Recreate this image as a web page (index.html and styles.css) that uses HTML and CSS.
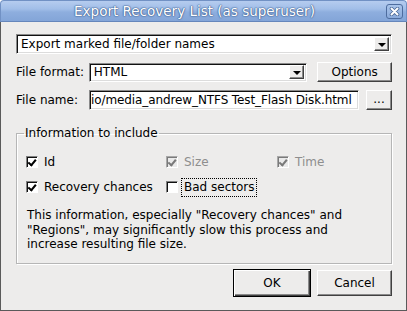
FILE: index.html
```html
<!DOCTYPE html>
<html lang="en">

<head>
    <meta charset="UTF-8">
    <title>Export Recovery List</title>
    <link rel="stylesheet" href="styles.css">
</head>

<body>

    <div class="window">
        <div class="titlebar">
            <span class="title">Export Recovery List (as superuser)</span>
            <span class="close">
                <svg width="11" height="9" viewBox="0 0 11 9">
                    <path d="M2.5 1.5 L8.5 7.5 M8.5 1.5 L2.5 7.5" stroke="#4a6898" stroke-width="3.6" stroke-linecap="round"/>
                    <path d="M2.5 1.5 L8.5 7.5 M8.5 1.5 L2.5 7.5" stroke="#fff" stroke-width="2" stroke-linecap="round"/>
                </svg>
            </span>
        </div>

        <div class="content">
            <div class="combo wide">
                <span class="value">Export marked file/folder names</span>
                <span class="arrow"><i></i></span>
            </div>

            <div class="row">
                <span class="label">File format:</span>
                <div class="combo format">
                    <span class="value">HTML</span>
                    <span class="arrow"><i></i></span>
                </div>
                <span class="button options">Options</span>
            </div>

            <div class="row">
                <span class="label">File name:</span>
                <div class="field">io/media_andrew_NTFS Test_Flash Disk.html</div>
                <span class="button dots">...</span>
            </div>

            <fieldset class="group">
                <legend>Information to include</legend>

                <div class="checks">
                    <div class="check"><span class="box on"></span><span class="text">Id</span></div>
                    <div class="check disabled"><span class="box on"></span><span class="text">Size</span></div>
                    <div class="check disabled"><span class="box on"></span><span class="text">Time</span></div>
                    <div class="check"><span class="box on"></span><span class="text">Recovery chances</span></div>
                    <div class="check"><span class="box"></span><span class="text focus">Bad sectors</span></div>
                </div>

                <p class="note">This information, especially "Recovery chances" and
                    "Regions", may significantly slow this process and
                    increase resulting file size.</p>
            </fieldset>

            <div class="actions">
                <span class="button default">OK</span>
                <span class="button cancel">Cancel</span>
            </div>
        </div>
    </div>

</body>

</html>
```

FILE: styles.css
```css
body {
    margin: 0;
    background-color: #fff;
    font-family: "DejaVu Sans", sans-serif;
    font-size: 12px;
    color: #000;
}

.window {
    width: 407px;
    height: 311px;
    display: flex;
    flex-direction: column;
}

.titlebar {
    height: 22px;
    display: flex;
    align-items: center;
    border-radius: 4px 4px 0 0;
    border: 1px solid #7191c4;
    border-bottom-color: #6586bb;
    box-sizing: border-box;
    background: linear-gradient(#b5ccef 0, #a1bee8 40%, #8eaede 55%, #83a5d8 100%);
}

.title {
    flex: 1;
    text-align: center;
    color: #fff;
    font-size: 13.5px;
    padding-left: 2px;
    text-shadow: 0 0 2px #3d5d8f, 0 0 1px #3d5d8f, 0 0 1px #3d5d8f;
}

.close {
    width: 17px;
    height: 15px;
    margin-right: 3px;
    box-sizing: border-box;
    border: 1px solid #4d6c9e;
    border-radius: 3px;
    background: linear-gradient(#a9c4ea, #8aaadb);
    display: flex;
    align-items: center;
    justify-content: center;
}

.content {
    flex: 1;
    background-color: #edeceb;
    border: 1px solid #5a5a5a;
    border-top: none;
    padding: 12px 14px 0 15px;
    display: flex;
    flex-direction: column;
}

/* sunken fields */
.combo,
.field {
    height: 20px;
    box-sizing: border-box;
    background-color: #fff;
    border: 1px solid;
    border-color: #8a8a8a #fff #fff #8a8a8a;
    box-shadow: inset 1px 1px 0 #111, inset -1px -1px 0 #dcdcdc;
    display: flex;
    align-items: center;
}

.combo .value {
    flex: 1;
    padding-left: 4px;
    white-space: nowrap;
}

.arrow {
    width: 15px;
    height: 14px;
    margin-right: 2px;
    box-sizing: border-box;
    background-color: #edeceb;
    border: 1px solid;
    border-color: #fff #404040 #404040 #fff;
    box-shadow: inset -1px -1px 0 #8a8a8a;
    display: flex;
    align-items: center;
    justify-content: center;
}

.arrow i {
    width: 0;
    height: 0;
    border-left: 4px solid transparent;
    border-right: 4px solid transparent;
    border-top: 4px solid #000;
    margin-top: 1px;
}

.row {
    display: flex;
    align-items: center;
    margin-top: 8px;
    height: 20px;
}

.label {
    width: 73px;
}

.format {
    width: 219px;
    height: 19px;
}

.field {
    width: 270px;
    padding-left: 1px;
    letter-spacing: -0.1px;
    white-space: nowrap;
    overflow: hidden;
}

/* raised buttons */
.button {
    height: 20px;
    box-sizing: border-box;
    background-color: #edeceb;
    border: 1px solid;
    border-color: #fff #404040 #404040 #fff;
    box-shadow: inset -1px -1px 0 #8a8a8a;
    display: flex;
    align-items: center;
    justify-content: center;
}

.options {
    width: 75px;
    margin-left: 10px;
}

.dots {
    width: 26px;
    margin-left: 7px;
    padding-bottom: 3px;
}

.group {
    margin: 16px 0 0;
    padding: 0 9px 11px;
    border: 1px solid #b6b6b6;
    box-shadow: inset 1px 1px 0 #fff, 1px 1px 0 #fff;
}

.group legend {
    padding: 0 1px;
    margin-left: -2px;
    line-height: 14px;
}

.checks {
    display: grid;
    grid-template-columns: 140px 111px 1fr;
    row-gap: 5px;
    margin-top: 12px;
}

.check {
    display: flex;
    align-items: center;
    height: 20px;
}

.box {
    width: 12px;
    height: 12px;
    box-sizing: border-box;
    background-color: #fff;
    border: 1px solid;
    border-color: #808080 #fff #fff #808080;
    box-shadow: inset 1px 1px 0 #111;
    position: relative;
}

.box.on::after {
    content: "";
    position: absolute;
    left: 2px;
    top: 1px;
    width: 3px;
    height: 6px;
    border: solid #000;
    border-width: 0 2px 2px 0;
    transform: rotate(40deg);
    transform-origin: 60% 60%;
}

.check .text {
    margin-left: 3px;
    padding: 1px 2px 2px;
    border: 1px solid transparent;
}

.check .focus {
    border: 1px dotted #000;
}

.disabled .text {
    color: #8e8e8e;
}

.disabled .box {
    background-color: #eaeaea;
    border-color: #a8a8a8 #fff #fff #a8a8a8;
    box-shadow: inset 1px 1px 0 #7a7a7a;
}

.disabled .box.on::after {
    border-color: #7a7a7a;
}

.note {
    margin: 11px 0 0 1px;
    line-height: 14.5px;
}

.actions {
    display: flex;
    justify-content: flex-end;
    align-items: center;
    gap: 6px;
    margin-top: 5px;
}

.default {
    width: 78px;
    height: 28px;
    border: 1px solid #000;
    box-shadow: inset 1px 1px 0 #fff, inset -1px -1px 0 #404040, inset -2px -2px 0 #8a8a8a;
}

.cancel {
    width: 75px;
    height: 26px;
}
```
